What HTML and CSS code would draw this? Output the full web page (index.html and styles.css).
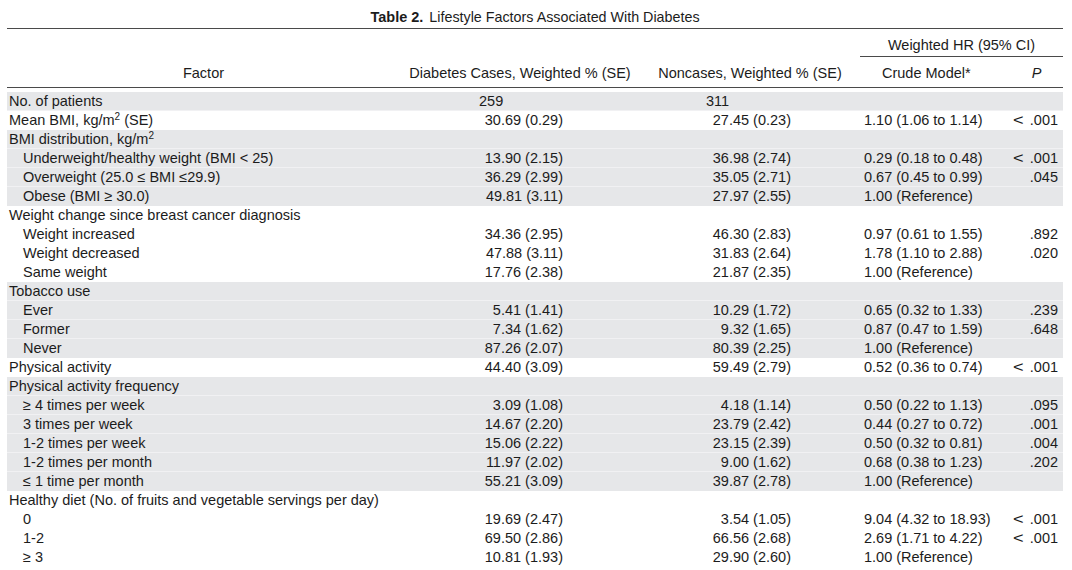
FILE: index.html
```html
<!DOCTYPE html>
<html lang="en">
<head>
<meta charset="utf-8">
<title>Table 2. Lifestyle Factors Associated With Diabetes</title>
<link rel="stylesheet" href="styles.css">
</head>
<body>
<div class="page">
  <div class="caption"><span class="label">Table 2.</span> Lifestyle Factors Associated With Diabetes</div>
  <table class="data">
    <colgroup>
      <col class="c-factor"><col class="c-cases"><col class="c-non"><col class="c-hr"><col class="c-p">
    </colgroup>
    <thead>
      <tr class="h1">
        <th rowspan="2" class="hb">Factor</th>
        <th rowspan="2" class="hb">Diabetes Cases, Weighted % (SE)</th>
        <th rowspan="2" class="hb">Noncases, Weighted % (SE)</th>
        <th colspan="2" class="group"><span class="group-rule">Weighted HR (95% CI)</span></th>
      </tr>
      <tr class="h2">
        <th class="hb crude">Crude Model*</th>
        <th class="hb pcol">P</th>
      </tr>
    </thead>
    <tbody>
      <tr class="shade first"><td class="f">No. of patients</td><td class="cnt c1">259</td><td class="cnt c2">311</td><td></td><td></td></tr>
      <tr><td class="f">Mean BMI, kg/m<sup>2</sup> (SE)</td><td class="n1">30.69 (0.29)</td><td class="n2">27.45 (0.23)</td><td class="hr">1.10 (1.06 to 1.14)</td><td class="p"><span class="lt">&lt;</span> .001</td></tr>

      <tr class="shade"><td class="f">BMI distribution, kg/m<sup>2</sup></td><td></td><td></td><td></td><td></td></tr>
      <tr class="shade"><td class="f sub">Underweight/healthy weight (BMI &lt; 25)</td><td class="n1">13.90 (2.15)</td><td class="n2">36.98 (2.74)</td><td class="hr">0.29 (0.18 to 0.48)</td><td class="p"><span class="lt">&lt;</span> .001</td></tr>
      <tr class="shade"><td class="f sub">Overweight (25.0 ≤ BMI ≤29.9)</td><td class="n1">36.29 (2.99)</td><td class="n2">35.05 (2.71)</td><td class="hr">0.67 (0.45 to 0.99)</td><td class="p">.045</td></tr>
      <tr class="shade last"><td class="f sub">Obese (BMI ≥ 30.0)</td><td class="n1">49.81 (3.11)</td><td class="n2">27.97 (2.55)</td><td class="hr">1.00 (Reference)</td><td class="p"></td></tr>

      <tr><td class="f">Weight change since breast cancer diagnosis</td><td></td><td></td><td></td><td></td></tr>
      <tr><td class="f sub">Weight increased</td><td class="n1">34.36 (2.95)</td><td class="n2">46.30 (2.83)</td><td class="hr">0.97 (0.61 to 1.55)</td><td class="p">.892</td></tr>
      <tr><td class="f sub">Weight decreased</td><td class="n1">47.88 (3.11)</td><td class="n2">31.83 (2.64)</td><td class="hr">1.78 (1.10 to 2.88)</td><td class="p">.020</td></tr>
      <tr><td class="f sub">Same weight</td><td class="n1">17.76 (2.38)</td><td class="n2">21.87 (2.35)</td><td class="hr">1.00 (Reference)</td><td class="p"></td></tr>

      <tr class="shade"><td class="f">Tobacco use</td><td></td><td></td><td></td><td></td></tr>
      <tr class="shade"><td class="f sub">Ever</td><td class="n1">5.41 (1.41)</td><td class="n2">10.29 (1.72)</td><td class="hr">0.65 (0.32 to 1.33)</td><td class="p">.239</td></tr>
      <tr class="shade"><td class="f sub">Former</td><td class="n1">7.34 (1.62)</td><td class="n2">9.32 (1.65)</td><td class="hr">0.87 (0.47 to 1.59)</td><td class="p">.648</td></tr>
      <tr class="shade last"><td class="f sub">Never</td><td class="n1">87.26 (2.07)</td><td class="n2">80.39 (2.25)</td><td class="hr">1.00 (Reference)</td><td class="p"></td></tr>

      <tr><td class="f">Physical activity</td><td class="n1">44.40 (3.09)</td><td class="n2">59.49 (2.79)</td><td class="hr">0.52 (0.36 to 0.74)</td><td class="p"><span class="lt">&lt;</span> .001</td></tr>

      <tr class="shade"><td class="f">Physical activity frequency</td><td></td><td></td><td></td><td></td></tr>
      <tr class="shade"><td class="f sub">≥ 4 times per week</td><td class="n1">3.09 (1.08)</td><td class="n2">4.18 (1.14)</td><td class="hr">0.50 (0.22 to 1.13)</td><td class="p">.095</td></tr>
      <tr class="shade"><td class="f sub">3 times per week</td><td class="n1">14.67 (2.20)</td><td class="n2">23.79 (2.42)</td><td class="hr">0.44 (0.27 to 0.72)</td><td class="p">.001</td></tr>
      <tr class="shade"><td class="f sub">1-2 times per week</td><td class="n1">15.06 (2.22)</td><td class="n2">23.15 (2.39)</td><td class="hr">0.50 (0.32 to 0.81)</td><td class="p">.004</td></tr>
      <tr class="shade"><td class="f sub">1-2 times per month</td><td class="n1">11.97 (2.02)</td><td class="n2">9.00 (1.62)</td><td class="hr">0.68 (0.38 to 1.23)</td><td class="p">.202</td></tr>
      <tr class="shade last"><td class="f sub">≤ 1 time per month</td><td class="n1">55.21 (3.09)</td><td class="n2">39.87 (2.78)</td><td class="hr">1.00 (Reference)</td><td class="p"></td></tr>

      <tr><td class="f">Healthy diet (No. of fruits and vegetable servings per day)</td><td></td><td></td><td></td><td></td></tr>
      <tr><td class="f sub">0</td><td class="n1">19.69 (2.47)</td><td class="n2">3.54 (1.05)</td><td class="hr">9.04 (4.32 to 18.93)</td><td class="p"><span class="lt">&lt;</span> .001</td></tr>
      <tr><td class="f sub">1-2</td><td class="n1">69.50 (2.86)</td><td class="n2">66.56 (2.68)</td><td class="hr">2.69 (1.71 to 4.22)</td><td class="p"><span class="lt">&lt;</span> .001</td></tr>
      <tr><td class="f sub">≥ 3</td><td class="n1">10.81 (1.93)</td><td class="n2">29.90 (2.60)</td><td class="hr">1.00 (Reference)</td><td class="p"></td></tr>
    </tbody>
  </table>
</div>
</body>
</html>
```
FILE: styles.css
```css
html, body {
  margin: 0;
  padding: 0;
  background: #ffffff;
}

body {
  font-family: "Liberation Sans", Arial, sans-serif;
  color: #1c1c1c;
  width: 1072px;
  height: 570px;
  overflow: hidden;
}

.page {
  padding-left: 7px;
  width: 1056px;
}

.caption {
  height: 29px;
  box-sizing: border-box;
  padding-top: 8px;
  line-height: 18px;
  font-size: 14.3px;
  text-align: center;
  border-bottom: 1px solid #4a4a4a;
}

.caption .label {
  font-family: "Liberation Sans Narrow", "Liberation Sans", Arial, sans-serif;
  font-weight: bold;
  font-size: 14.5px;
  margin-right: 2px;
}

.data {
  width: 1056px;
  border-collapse: separate;
  border-spacing: 0;
  table-layout: fixed;
  font-size: 14.5px;
}

.c-factor { width: 393px; }
.c-cases { width: 240px; }
.c-non { width: 220px; }
.c-hr { width: 150px; }
.c-p { width: 53px; }

.data th {
  font-weight: normal;
  padding: 0;
  line-height: 18px;
  text-align: center;
  white-space: nowrap;
}

.h1 th.group {
  padding-top: 7px;
  padding-bottom: 0;
  padding-left: 0;
  vertical-align: top;
}

.group-rule {
  display: block;
  padding-bottom: 2px;
  border-bottom: 1px solid #4a4a4a;
}

.data th.hb {
  vertical-align: bottom;
  padding-top: 7px;
  padding-bottom: 5px;
  border-bottom: 1px solid #4a4a4a;
}

.data th.crude {
  text-align: left;
  padding-left: 22px;
}

.data th.pcol {
  font-style: italic;
  padding-left: 0;
}

.data td {
  padding: 1px 0 0 0;
  line-height: 17px;
  height: 17px;
  border-bottom: 1px solid transparent;
  white-space: nowrap;
  vertical-align: top;
}

.data tr.shade td {
  background: #e6e7e9;
  border-bottom-color: #f1f1f3;
}

.data tr.shade.last td {
  border-bottom-color: #e6e7e9;
}

.data tr.first td {
  border-top: 4px solid #ffffff;
}

.data td.f {
  padding-left: 2px;
}

.data td.f.sub {
  padding-left: 16px;
}

.data td.n1 {
  text-align: right;
  padding-right: 77px;
}

.data td.n2 {
  text-align: right;
  padding-right: 69px;
}

.data td.cnt.c1 {
  padding-left: 79px;
}

.data td.cnt.c2 {
  padding-left: 66px;
}

.data td.hr {
  padding-left: 4px;
}

.data td.p {
  text-align: right;
  padding-right: 5px;
}

.data .lt {
  display: inline-block;
  transform: scaleX(1.25);
  margin-right: 3px;
}

.data sup {
  font-size: 10px;
  line-height: 0;
  vertical-align: 5px;
}
```
